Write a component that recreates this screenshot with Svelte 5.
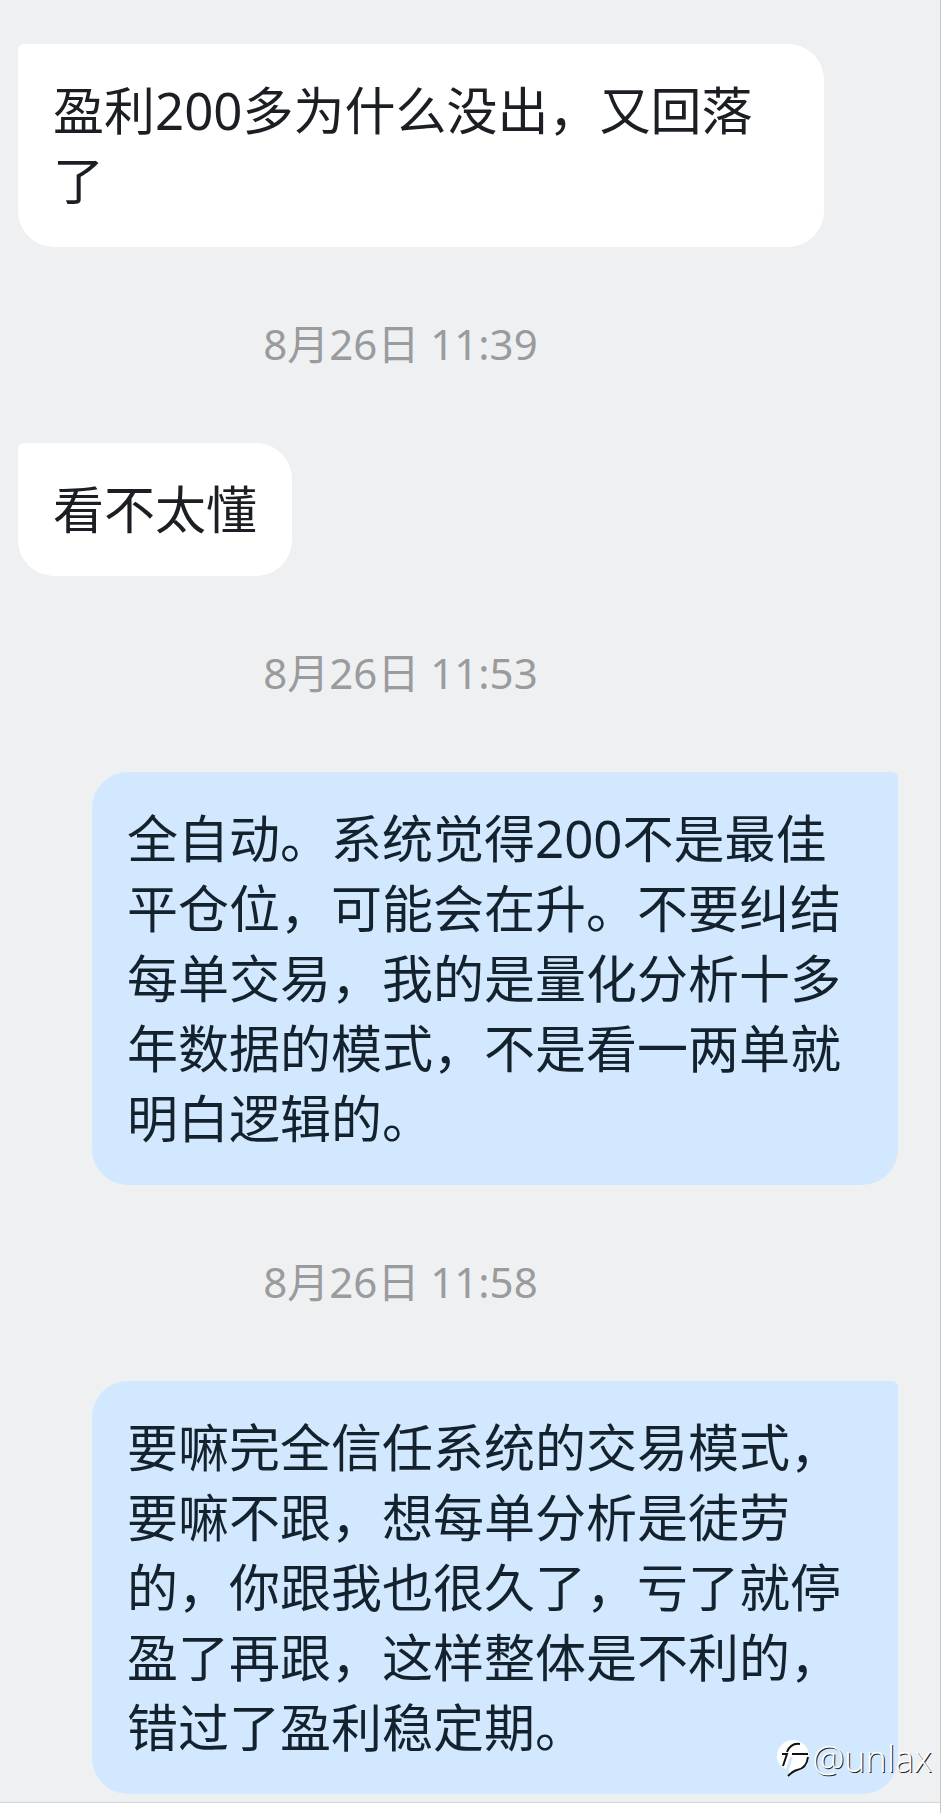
<script lang="ts">
  interface Message {
    from: 'them' | 'me'
    text: string
    time?: string
  }

  const messages: Message[] = [
    { from: 'them', text: '盈利200多为什么没出，又回落了' },
    { from: 'them', time: '8月26日 11:39', text: '看不太懂' },
    {
      from: 'me',
      time: '8月26日 11:53',
      text: '全自动。系统觉得200不是最佳平仓位，可能会在升。不要纠结每单交易，我的是量化分析十多年数据的模式，不是看一两单就明白逻辑的。',
    },
    {
      from: 'me',
      time: '8月26日 11:58',
      text: '要嘛完全信任系统的交易模式，要嘛不跟，想每单分析是徒劳的，你跟我也很久了，亏了就停盈了再跟，这样整体是不利的，错过了盈利稳定期。',
    },
  ]
</script>

<main class="chat">
  {#each messages as message}
    {#if message.time}
      <time class="time">{message.time}</time>
    {/if}
    <p class="bubble {message.from}">{message.text}</p>
  {/each}

  <div class="watermark">
    <svg class="logo" viewBox="0 0 32 38" aria-hidden="true">
      <path
        class="logo-body"
        d="M16 0a16 16 0 0 1 16 16c0 7-4 12-10 14-4 1-7 2-10 5 0-3 0-6 1-9l3-9h-3l-4 12C3 27 0 22 0 16A16 16 0 0 1 16 0z"
      />
      <path class="logo-line" d="M6 26l4-12H5M10 12c2-5 6-9 13-8M15 14h16M31 17c-1 8-5 12-11 13-4 1-6 3-9 6" />
    </svg>
    <span>@unlax</span>
  </div>
</main>

<style>
  :global(body) {
    margin: 0;
    background: #fff;
  }

  :global(#app) {
    box-sizing: border-box;
    min-height: 100vh;
    border-right: 1px solid #c6c7c9;
  }

  .chat {
    position: relative;
    display: flex;
    flex-direction: column;
    align-items: flex-start;
    padding: 44px 42px 8px 18px;
    border-bottom: 1px solid #d4d5d7;
    background: #eff0f2;
    font-family: "Noto Sans", "Noto Sans CJK SC", sans-serif;
  }

  .bubble {
    box-sizing: border-box;
    max-width: calc(100% - 74px);
    margin: 0;
    padding: 31px 35px 32px;
    border-radius: 36px;
    font-size: 51px;
    line-height: 70px;
  }

  .them {
    border-top-left-radius: 6px;
    background: #fff;
    color: #1b1f24;
  }

  .me {
    align-self: flex-end;
    border-top-right-radius: 6px;
    background: #d2e8ff;
    color: #14222e;
  }

  .time {
    align-self: stretch;
    margin: 67px 115px 69px 0;
    color: #999b9c;
    font-size: 42px;
    line-height: 60px;
    text-align: center;
  }

  .watermark {
    position: absolute;
    right: 8px;
    bottom: 19px;
    display: flex;
    align-items: center;
    gap: 3px;
    color: #fff;
    font-family: "Open Sans", "Noto Sans", sans-serif;
    font-size: 36px;
    font-weight: 300;
    line-height: 48px;
    text-shadow: 1px 1px 0 #222;
  }

  .logo {
    width: 32px;
    height: 38px;
  }

  .logo-body {
    fill: #fff;
  }

  .logo-line {
    fill: none;
    stroke: #111;
    stroke-width: 2;
  }
</style>
